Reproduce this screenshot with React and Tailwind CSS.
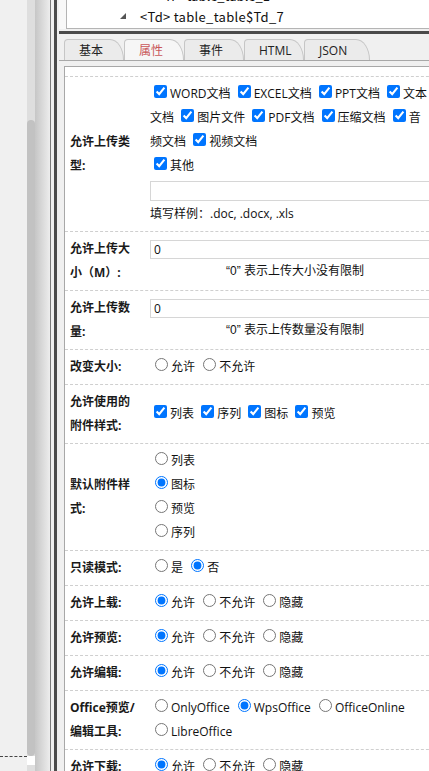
import React from "react";

const Q = ({ children }) => (
  <span className="font-['Liberation_Sans',sans-serif]">{children}</span>
);

function Cb({ label }) {
  return (
    <span className="whitespace-nowrap">
      <input type="checkbox" defaultChecked className="m-[3px_3px_3px_4px]" />
      {label}
    </span>
  );
}

function Rd({ label, checked, name }) {
  return (
    <span className="whitespace-nowrap">
      <input type="radio" name={name} defaultChecked={checked} className="m-[3px_3px_0_5px]" />
      {label}
    </span>
  );
}

function Row({ label, children, valueClass = "" }) {
  return (
    <div className="flex border-b border-dashed border-[#cfcfcf]">
      <div className="w-[80px] shrink-0 px-[5px] py-[5px] flex items-center font-bold text-[#1a1a1a] leading-[24px]">
        <div>{label}</div>
      </div>
      <div
        className={
          "w-[300px] shrink-0 px-[5px] py-[5px] flex flex-col justify-center leading-[24px] text-[#111] " +
          valueClass
        }
      >
        {children}
      </div>
    </div>
  );
}

function Tab({ label, active, wide }) {
  return (
    <div
      className={
        (wide ? "w-[66px] " : "w-[60px] ") +
        "h-[21px] shrink-0 border border-b-0 border-[#c6c6c6] rounded-tl-[4px] rounded-tr-[14px_21px] pl-[14px] pt-[2px] leading-[18px] text-[12px] " +
        (active ? "bg-[#f6f6f6] text-[#c9585a]" : "bg-[#ebebeb] text-[#222]")
      }
    >
      {label}
    </div>
  );
}

export default function App() {
  return (
    <div className="w-[429px] h-[771px] overflow-hidden flex bg-[#f0f0f0] text-[12px] font-['Open_Sans','Noto_Sans_CJK_SC',sans-serif]">
      {/* left canvas */}
      <div className="w-[27px] shrink-0 flex flex-col">
        <div className="h-[757px] border-b border-dashed border-[#444]" />
      </div>
      {/* scrollbar */}
      <div className="w-[8px] shrink-0 bg-[#dedede] flex flex-col">
        <div className="h-[120px]" />
        <div className="h-[636px] bg-[#c2c2c2] rounded-[4px]" />
        <div className="h-[9px] bg-white" />
      </div>
      {/* shadow */}
      <div className="w-[15px] shrink-0 bg-linear-to-r from-[#c6c6c6] to-[#ededed]" />
      {/* splitter */}
      <div className="w-[9px] shrink-0 flex">
        <div className="w-[1px] bg-[#7a7a7a]" />
        <div className="w-[3px] bg-[#f0f0f0]" />
        <div className="w-[3px] bg-[#4b4b4b]" />
        <div className="w-[2px] bg-[#f0f0f0]" />
      </div>
      {/* right pane */}
      <div className="w-[370px] shrink-0 flex flex-col overflow-hidden">
        {/* tree */}
        <div className="h-[29px] shrink-0 bg-[#f8f8f8] pl-[7px]">
          <div className="h-[29px] bg-white border-l border-b border-[#b4b4b4] overflow-hidden relative text-[13px] text-[#111] font-['Noto_Sans_CJK_SC',sans-serif]">
            <div className="absolute left-[90px] top-[-14px] leading-[20px] whitespace-nowrap">
              &lt;Tr&gt; table_table_1
            </div>
            <div className="flex items-center h-[29px] pt-[4px] whitespace-nowrap">
              <svg width="7" height="7" viewBox="0 0 7 7" className="ml-[53px] mr-[13px]">
                <polygon points="6,0 6,6 0,6" fill="#555" />
              </svg>
              <span className="tracking-[0.3px]">&lt;Td&gt; table_table$Td_7</span>
            </div>
          </div>
        </div>
        <div className="h-[2px] shrink-0 bg-[#f0f0f0]" />
        <div className="h-[3px] shrink-0 bg-[#4a4a4a]" />
        {/* tabs */}
        <div className="h-[27px] shrink-0 flex items-end pl-[5px] border-b border-[#a8a8a8] bg-[#f0f0f0]">
          <Tab label="基本" />
          <Tab label="属性" active />
          <Tab label="事件" />
          <Tab label="HTML" />
          <Tab label="JSON" wide />
        </div>
        <div className="h-[5px] shrink-0" />
        {/* panel */}
        <div className="ml-[5px] w-[400px] flex-1 bg-white border-l border-t border-[#a8a8a8]">
          <div className="h-[10px] border-b border-dashed border-[#cfcfcf]" />

          <Row label="允许上传类型:" valueClass="!justify-start">
            <div className="whitespace-nowrap">
              <Cb label="WORD文档" /> <Cb label="EXCEL文档" /> <Cb label="PPT文档" />{" "}
              <Cb label="文本" />
            </div>
            <div className="whitespace-nowrap">
              文档 <Cb label="图片文件" /> <Cb label="PDF文档" /> <Cb label="压缩文档" />{" "}
              <Cb label="音" />
            </div>
            <div className="whitespace-nowrap">
              频文档 <Cb label="视频文档" />
            </div>
            <div className="whitespace-nowrap">
              <Cb label="其他" />
            </div>
            <div className="mt-[3px] mb-[1px] h-[20px] border border-[#d6d6d6] bg-white" />
            <div>填写样例：.doc, .docx, .xls</div>
          </Row>

          <Row label="允许上传大小（M）:" valueClass="!justify-start">
            <div className="mt-[3px] h-[19px] border border-[#d6d6d6] pl-[3px] leading-[17px]">0</div>
            <div className="text-center">
              <Q>“0”</Q> 表示上传大小没有限制
            </div>
          </Row>

          <Row label="允许上传数量:" valueClass="!justify-start">
            <div className="mt-[3px] h-[19px] border border-[#d6d6d6] pl-[3px] leading-[17px]">0</div>
            <div className="text-center">
              <Q>“0”</Q> 表示上传数量没有限制
            </div>
          </Row>

          <Row label="改变大小:">
            <div className="whitespace-nowrap">
              <Rd name="r1" label="允许" /> <Rd name="r1" label="不允许" />
            </div>
          </Row>

          <Row label="允许使用的附件样式:">
            <div className="whitespace-nowrap">
              <Cb label="列表" /> <Cb label="序列" /> <Cb label="图标" /> <Cb label="预览" />
            </div>
          </Row>

          <Row label="默认附件样式:">
            <div><Rd name="r2" label="列表" /></div>
            <div><Rd name="r2" label="图标" checked /></div>
            <div><Rd name="r2" label="预览" /></div>
            <div><Rd name="r2" label="序列" /></div>
          </Row>

          <Row label="只读模式:">
            <div className="whitespace-nowrap">
              <Rd name="r3" label="是" /> <Rd name="r3" label="否" checked />
            </div>
          </Row>

          <Row label="允许上载:">
            <div className="whitespace-nowrap">
              <Rd name="r4" label="允许" checked /> <Rd name="r4" label="不允许" />{" "}
              <Rd name="r4" label="隐藏" />
            </div>
          </Row>

          <Row label="允许预览:">
            <div className="whitespace-nowrap">
              <Rd name="r5" label="允许" checked /> <Rd name="r5" label="不允许" />{" "}
              <Rd name="r5" label="隐藏" />
            </div>
          </Row>

          <Row label="允许编辑:">
            <div className="whitespace-nowrap">
              <Rd name="r6" label="允许" checked /> <Rd name="r6" label="不允许" />{" "}
              <Rd name="r6" label="隐藏" />
            </div>
          </Row>

          <Row label="Office预览/编辑工具:">
            <div className="whitespace-nowrap">
              <Rd name="r7" label="OnlyOffice" /> <Rd name="r7" label="WpsOffice" checked />{" "}
              <Rd name="r7" label="OfficeOnline" />
            </div>
            <div className="whitespace-nowrap">
              <Rd name="r7" label="LibreOffice" />
            </div>
          </Row>

          <Row label="允许下载:">
            <div className="whitespace-nowrap">
              <Rd name="r8" label="允许" checked /> <Rd name="r8" label="不允许" />{" "}
              <Rd name="r8" label="隐藏" />
            </div>
          </Row>
        </div>
      </div>
    </div>
  );
}
